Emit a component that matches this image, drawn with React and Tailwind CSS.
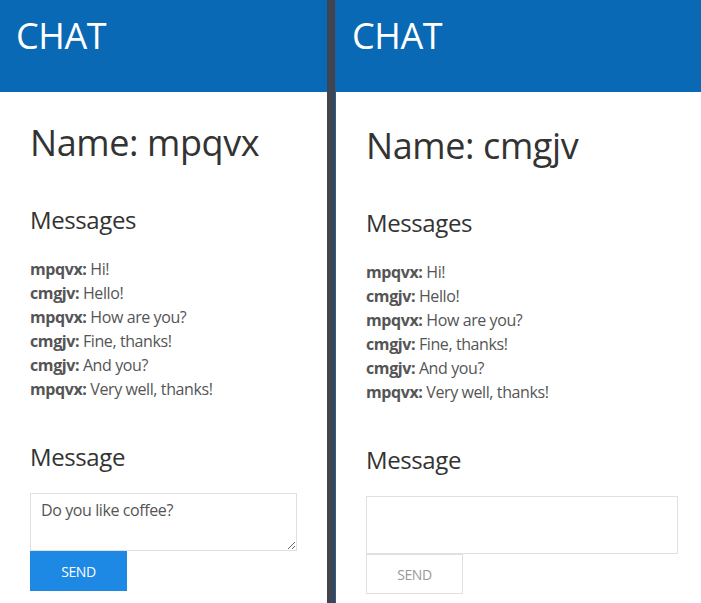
import React from 'react'

const MESSAGES = [
  { from: 'mpqvx', text: 'Hi!' },
  { from: 'cmgjv', text: 'Hello!' },
  { from: 'mpqvx', text: 'How are you?' },
  { from: 'cmgjv', text: 'Fine, thanks!' },
  { from: 'cmgjv', text: 'And you?' },
  { from: 'mpqvx', text: 'Very well, thanks!' },
]

function ChatPanel({ name, draft, width, shift, padRight }) {
  const active = draft.length > 0
  return (
    <div className="flex flex-col bg-white shrink-0 min-h-[603px]" style={{ width }}>
      <div className="h-[92px] bg-[#0a69b4] px-[16px] pt-[16px] shrink-0">
        <div className="text-[36px] leading-[40px] text-white">CHAT</div>
      </div>

      <div className="pl-[30px]" style={{ paddingTop: shift, paddingRight: padRight }}>
        <h1 className="mt-[31px] text-[36px] leading-[40px] text-[#333]">Name: {name}</h1>

        <h3 className="mt-[43px] text-[24px] leading-[28px] text-[#333]">Messages</h3>
        <div className="mt-[23px] text-[16px] leading-[24px] text-[#555]">
          {MESSAGES.map((m, i) => (
            <div key={i}>
              <span className="font-bold">{m.from}:</span> {m.text}
            </div>
          ))}
        </div>

        <h3 className="mt-[42px] text-[24px] leading-[28px] text-[#333]">Message</h3>
        <div className="mt-[22px] flex flex-col items-start">
          <textarea
            defaultValue={draft}
            className={
              'block w-full h-[58px] border border-[#e0e0e0] px-[10px] py-[6px] text-[16px] leading-[20px] text-[#555] outline-none ' +
              (active ? 'resize' : 'resize-none')
            }
          />
          {active ? (
            <button className="w-[97px] h-[40px] bg-[#1e88e5] text-white text-[14px]">SEND</button>
          ) : (
            <button className="w-[97px] h-[40px] bg-white border border-[#e0e0e0] text-[#999] text-[14px]">SEND</button>
          )}
        </div>
      </div>
    </div>
  )
}

export default function App() {
  return (
    <div className="flex w-[701px] h-[603px] overflow-hidden bg-white tracking-[-0.025em] font-['Segoe_UI','Open_Sans',sans-serif]">
      <ChatPanel name="mpqvx" draft="Do you like coffee?" width={327} shift={0} padRight={30} />
      <div className="w-[9px] shrink-0 bg-[#3e4450] border-r border-[#1f5f9e]" />
      <ChatPanel name="cmgjv" draft="" width={365} shift={3} padRight={23} />
    </div>
  )
}
